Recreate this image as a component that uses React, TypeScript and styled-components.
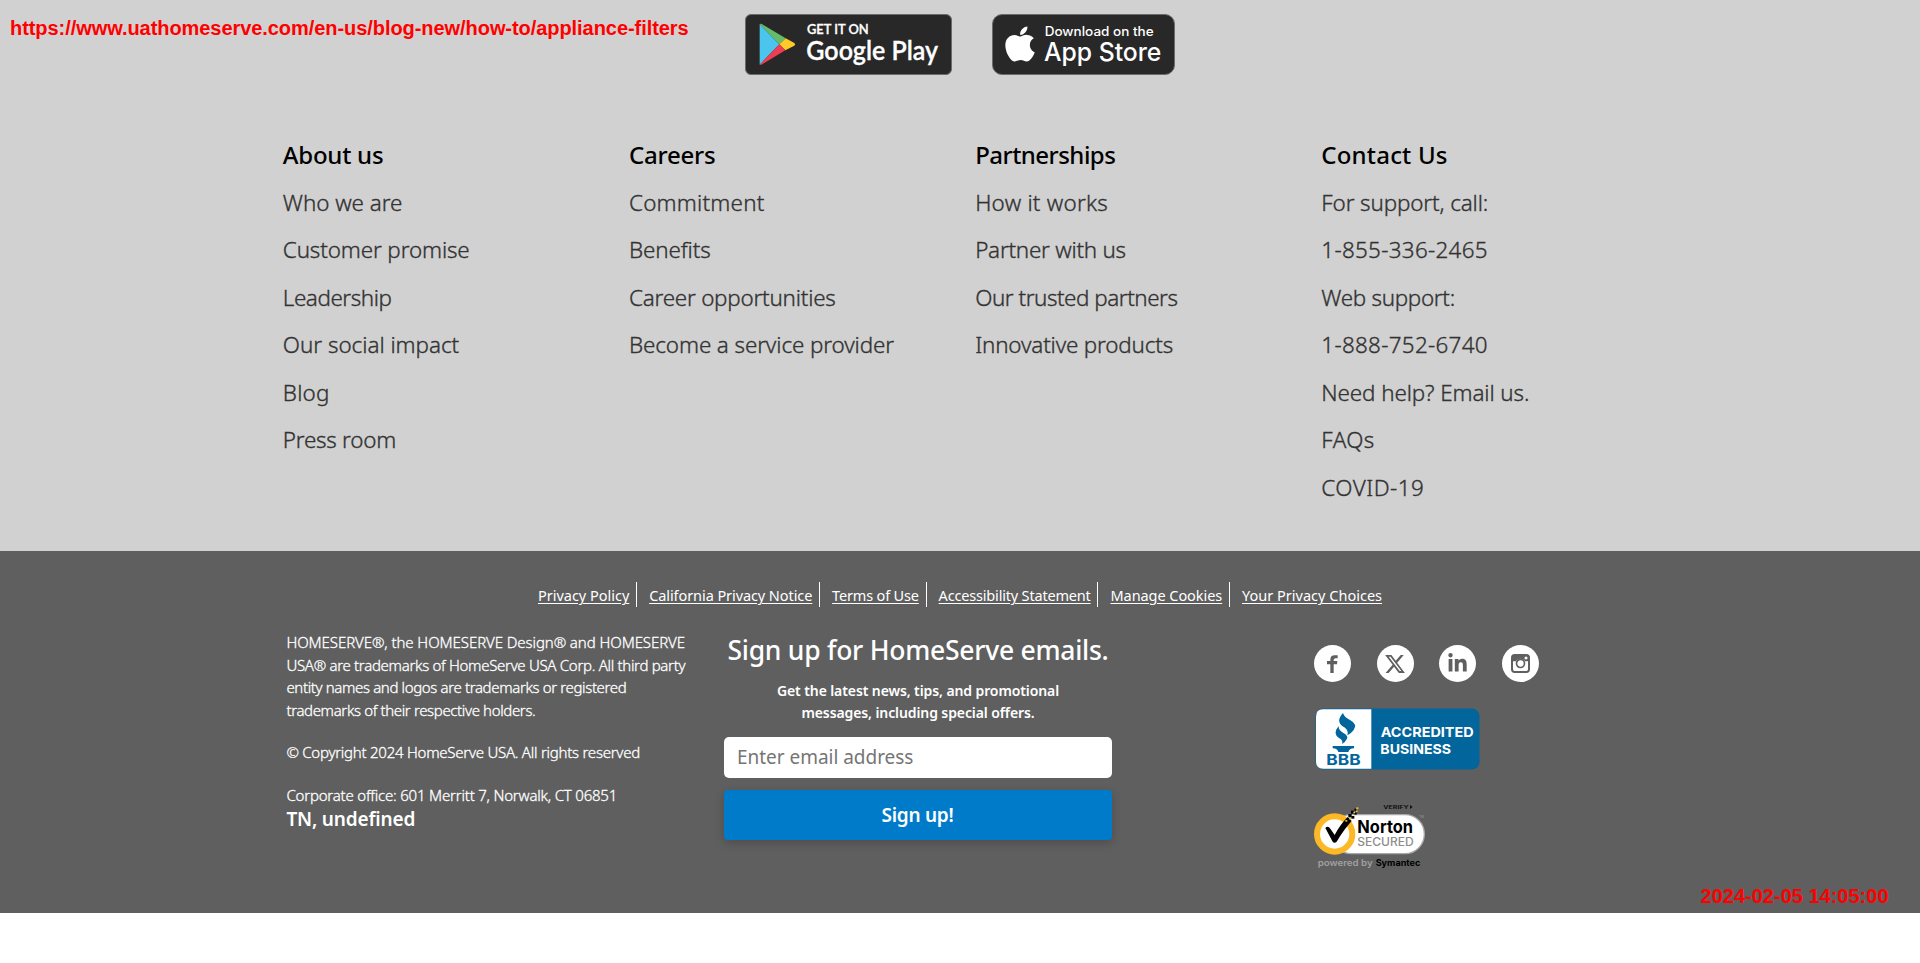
import React from 'react';
import styled, { createGlobalStyle } from 'styled-components';
import { FaApple, FaLinkedinIn, FaXTwitter } from 'react-icons/fa6';

const GlobalStyle = createGlobalStyle`
  *, *::before, *::after { box-sizing: border-box; }
  html, body { margin: 0; padding: 0; background: #fff; overflow: hidden; }
  body { font-family: "Noto Sans", "Open Sans", sans-serif; }
  svg { display: block; }
`;

const Page = styled.div`
  position: relative;
  width: 1920px;
  height: 963px;
`;

const Overlay = styled.div<{ $corner: 'top' | 'bottom' }>`
  position: absolute;
  ${p => (p.$corner === 'top'
    ? 'top: 18px; left: 10px; letter-spacing: -0.06px;'
    : 'top: 886px; right: 31.5px; letter-spacing: 0;')}
  font: 700 20px/20px "Liberation Sans", Arial, sans-serif;
  color: #ff0000;
  white-space: nowrap;
`;

const LightSection = styled.section`
  height: 551px;
  background: #d1d1d1;
`;

const StoreBadges = styled.div`
  display: flex;
  justify-content: center;
  gap: 40px;
  height: 131px;
  padding-top: 14px;
`;

const StoreBadge = styled.a<{ $width: number; $radius: number }>`
  display: block;
  width: ${p => p.$width}px;
  height: 61px;
  border-radius: ${p => p.$radius}px;
  border: 1px solid #6b6b6b;
  background: #282828;
  color: #fff;
  overflow: hidden;
`;

const LinkColumns = styled.nav`
  display: grid;
  grid-template-columns: repeat(4, 346.2px);
  padding-left: 282.8px;
`;

const ColumnTitle = styled.h3<{ $track: number }>`
  margin: 0;
  font-size: 24px;
  font-weight: 500;
  line-height: 47.5px;
  letter-spacing: ${p => p.$track}px;
  color: #000;
`;

const ColumnList = styled.ul`
  list-style: none;
  margin: 0;
  padding: 0;
`;

const ColumnItem = styled.li<{ $track: number }>`
  font-size: 22.4px;
  font-weight: 300;
  line-height: 47.5px;
  letter-spacing: ${p => p.$track}px;
  color: #333;
  -webkit-text-stroke: 0.35px #333;
  white-space: nowrap;
`;

const DarkSection = styled.section`
  height: 362px;
  padding-top: 31px;
  background: #5f5f5f;
  color: #fff;
`;

const PolicyLinks = styled.div`
  display: flex;
  justify-content: center;
  height: 49px;
`;

const PolicyLink = styled.a<{ $track: number }>`
  display: block;
  height: 25px;
  padding: 0 6.800px 0 12px;
  border-right: 1px solid #fff;
  font-size: 14.5px;
  line-height: 27.5px;
  letter-spacing: ${p => p.$track}px;
  text-decoration: underline;
  text-decoration-thickness: 1px;
  text-underline-offset: 1.5px;
  white-space: nowrap;
  &:first-child { padding-left: 0; }
  &:last-child { padding-right: 0; border-right: 0; }
`;

const FooterColumns = styled.div`
  display: flex;
  padding-left: 286px;
`;

const Legal = styled.div`
  width: 438px;
  padding-left: 0.4px;
`;

const LegalParagraph = styled.p`
  margin: 0 0 19.4px;
  & + & { margin-bottom: 20.2px; }
  &:last-of-type { margin-bottom: 0; }
`;

const LegalLine = styled.span<{ $track: number }>`
  display: block;
  font-size: 15px;
  font-weight: 300;
  line-height: 22.7px;
  letter-spacing: ${p => p.$track}px;
  -webkit-text-stroke: 0.3px #fff;
  white-space: nowrap;
`;

const Location = styled.div`
  font-size: 19px;
  font-weight: 600;
  line-height: 24px;
  letter-spacing: -0.17px;
`;

const SignUp = styled.form`
  display: flex;
  flex-direction: column;
  width: 388px;
  padding-top: 1px;
  text-align: center;
`;

const SignUpTitle = styled.h2`
  margin: 0 0 12px;
  font-size: 26.5px;
  font-weight: 500;
  line-height: 36px;
  letter-spacing: -0.26px;
  white-space: nowrap;
`;

const SignUpText = styled.p`
  margin: 0 0 13px;
  font-size: 14px;
  font-weight: 600;
  line-height: 22px;
  letter-spacing: -0.1px;
`;

const EmailInput = styled.input`
  height: 41px;
  margin: 0 0 12px;
  padding: 0 13px 1px;
  border: 0;
  border-radius: 5px;
  background: #fff;
  font: 400 19px "Noto Sans", sans-serif;
  letter-spacing: -0.03px;
  &::placeholder { color: #757575; opacity: 1; }
`;

const SubmitButton = styled.button`
  height: 50px;
  padding: 0 1px 1px 0;
  border: 0;
  border-radius: 4px;
  background: #007bc9;
  box-shadow: 0 3px 10px rgba(0, 0, 0, 0.2);
  color: #fff;
  font: 600 19px "Noto Sans", sans-serif;
  letter-spacing: -0.26px;
`;

const Trust = styled.div`
  padding: 14px 0 0 202px;
`;

const SocialRow = styled.div`
  display: flex;
  gap: 25.5px;
  height: 63px;
`;

const SocialIcon = styled.a`
  display: flex;
  align-items: center;
  justify-content: center;
  width: 37px;
  height: 37px;
  border-radius: 50%;
  background: #fff;
  color: #5f5f5f;
`;

const BbbSeal = styled.div`
  height: 97px;
  padding-left: 1px;
`;

type Entry = [label: string, track: number];

const columns: { title: Entry; items: Entry[] }[] = [
  {
    title: ['About us', -0.24],
    items: [
      ['Who we are', -0.04],
      ['Customer promise', -0.12],
      ['Leadership', -0.42],
      ['Our social impact', -0.02],
      ['Blog', 0.2],
      ['Press room', -0.24],
    ],
  },
  {
    title: ['Careers', -0.22],
    items: [
      ['Commitment', 0.22],
      ['Benefits', -0.1],
      ['Career opportunities', -0.22],
      ['Become a service provider', -0.1],
    ],
  },
  {
    title: ['Partnerships', -0.52],
    items: [
      ['How it works', 0.24],
      ['Partner with us', -0.24],
      ['Our trusted partners', -0.46],
      ['Innovative products', -0.16],
    ],
  },
  {
    title: ['Contact Us', 0.18],
    items: [
      ['For support, call:', -0.12],
      ['1-855-336-2465', 0.3],
      ['Web support:', -0.3],
      ['1-888-752-6740', 0.3],
      ['Need help? Email us.', -0.1],
      ['FAQs', 0.4],
      ['COVID-19', 0.46],
    ],
  },
];

const policies: Entry[] = [
  ['Privacy Policy', -0.01],
  ['California Privacy Notice', -0.08],
  ['Terms of Use', -0.17],
  ['Accessibility Statement', -0.18],
  ['Manage Cookies', -0.06],
  ['Your Privacy Choices', 0.01],
];

const legal: Entry[][] = [
  [
    ['HOMESERVE®, the HOMESERVE Design® and HOMESERVE', -0.08],
    ['USA® are trademarks of HomeServe USA Corp. All third party', -0.3],
    ['entity names and logos are trademarks or registered', -0.36],
    ['trademarks of their respective holders.', -0.36],
  ],
  [['© Copyright 2024 HomeServe USA. All rights reserved', -0.25]],
  [['Corporate office: 601 Merritt 7, Norwalk, CT 06851', -0.2]],
];

const GooglePlayArt = () => (
  <svg width="205" height="59" viewBox="49 45 615 177">
    <path d="M90 72V194L149 133Z" fill="#4bc4ee" />
    <path d="M90 72Q94 70 100 74L168 115L149 133Z" fill="#66bb6a" />
    <path d="M168 115L194 129Q199 133 194 137L167 151L149 133Z" fill="#ffca28" />
    <path d="M90 194Q94 196 100 191L167 151L149 133Z" fill="#ef3e52" />
    <g fill="#fff" stroke="#fff" strokeWidth="1" fontFamily="Lato, sans-serif">
      <text x="232" y="101" fontSize="39" fontWeight="600" textLength="185" lengthAdjust="spacingAndGlyphs">GET IT ON</text>
      <text x="230" y="180" fontSize="81" fontWeight="600" textLength="395" lengthAdjust="spacingAndGlyphs">Google Play</text>
    </g>
  </svg>
);

const AppStoreArt = () => (
  <svg width="181" height="59" viewBox="789 45 543 177">
    <FaApple x="810" y="72" size={120} color="#fff" />
    <g fill="#fff" fontFamily="Inter, sans-serif">
      <text x="944" y="109" fontSize="38" fontWeight="500" textLength="327" lengthAdjust="spacingAndGlyphs">Download on the</text>
      <text x="942" y="182" fontSize="76" fontWeight="500" textLength="352" lengthAdjust="spacingAndGlyphs">App Store</text>
    </g>
  </svg>
);

const FacebookGlyph = () => (
  <svg width="11" height="18" viewBox="0 0 33 54">
    <path d="M10 54V28H0V18H10V14Q10 1 23 1H32V10H26Q20 10 20 15V18H31L30 28H20V54Z" fill="currentColor" />
  </svg>
);

const InstagramGlyph = () => (
  <svg width="19" height="19" viewBox="0 0 57 57">
    <rect x="3" y="3" width="51" height="51" rx="8" fill="none" stroke="currentColor" strokeWidth="6" />
    <path d="M3 10Q3 3 10 3H47Q54 3 54 10V22H42A16 16 0 0 0 15 22H3Z" fill="currentColor" />
    <rect x="41" y="8" width="8" height="8" rx="1" fill="#fff" />
    <circle cx="28.5" cy="28.5" r="12" fill="#fff" stroke="currentColor" strokeWidth="5" />
  </svg>
);

const BbbArt = () => (
  <svg width="165" height="62" viewBox="48 234 495 186">
    <rect x="49.500" y="235.500" width="492" height="183" rx="22" fill="#02659b" />
    <path d="M217 238H72Q51 238 51 260V394Q51 416 72 416H217Z" fill="#fff" />
    <g fill="#02659b">
      <path d="M132 249Q136 262 153 270Q176 282 164 300Q159 308 145 316Q150 302 136 292Q107 276 132 249Z" />
      <path d="M119 288Q118 301 132 308Q150 317 143 328Q138 338 129 342Q134 331 120 324Q100 311 119 288Z" />
      <path d="M101 348H165V355Q150 356 148 366H118Q116 356 101 355Z" />
    </g>
    <g fontFamily="Inter, sans-serif">
      <text x="82" y="404" fill="#02659b" fontSize="43" fontWeight="700" textLength="103" lengthAdjust="spacingAndGlyphs">BBB</text>
      <g fill="#fff" fontWeight="700" fontSize="41">
        <text x="245" y="321" textLength="279" lengthAdjust="spacingAndGlyphs">ACCREDITED</text>
        <text x="244" y="373" textLength="212" lengthAdjust="spacingAndGlyphs">BUSINESS</text>
      </g>
    </g>
  </svg>
);

const NortonArt = () => (
  <svg width="114" height="67" viewBox="42 45 342 201">
    <rect x="96" y="74" width="277" height="117" rx="58" fill="#fff" stroke="#a8a8a8" strokeWidth="4" />
    <circle cx="104" cy="132" r="53" fill="#fff" stroke="#fdb825" strokeWidth="18" />
    <path d="M76 114Q84 106 91 116L104 135Q120 104 143 81L155 93Q132 118 110 155Q103 161 98 155Z" fill="#000" />
    <g fill="#000">
      <rect x="145" y="72" width="10" height="10" />
      <rect x="154" y="78" width="9" height="8" />
      <rect x="153" y="62" width="9" height="9" />
      <rect x="163" y="68" width="7" height="6" />
      <rect x="163" y="56" width="6" height="6" />
    </g>
    <g fill="#fdb825">
      <rect x="136" y="90" width="6" height="5" />
      <rect x="148" y="84" width="5" height="5" />
      <rect x="160" y="65" width="5" height="5" />
      <rect x="169" y="52" width="6" height="6" />
      <rect x="168" y="62" width="5" height="4" />
    </g>
    <g fontFamily="Inter, sans-serif">
      <text x="250" y="56" fill="#111" fontSize="14" fontWeight="700" textLength="76" lengthAdjust="spacingAndGlyphs">VERIFY</text>
      <path d="M330 45L338 51L330 57Z" fill="#111" />
      <text x="172" y="130" fill="#000" fontSize="54" fontWeight="700" textLength="167" lengthAdjust="spacingAndGlyphs">Norton</text>
      <text x="172" y="168" fill="#8c8c8c" fontSize="34" fontWeight="500" textLength="169" lengthAdjust="spacingAndGlyphs">SECURED</text>
      <text x="357" y="84" fill="#999" fontSize="10" textLength="15" lengthAdjust="spacingAndGlyphs">TM</text>
      <text x="53" y="229" fill="#a0a0a0" fontSize="27" fontWeight="600" textLength="165" lengthAdjust="spacingAndGlyphs">powered by</text>
      <text x="227" y="229" fill="#000" fontSize="27" fontWeight="700" textLength="134" lengthAdjust="spacingAndGlyphs">Symantec</text>
    </g>
  </svg>
);

export default function App() {
  return (
    <Page>
      <GlobalStyle />
      <LightSection>
        <StoreBadges>
          <StoreBadge $width={207} $radius={6}><GooglePlayArt /></StoreBadge>
          <StoreBadge $width={183} $radius={10}><AppStoreArt /></StoreBadge>
        </StoreBadges>
        <LinkColumns>
          {columns.map(({ title, items }) => (
            <div key={title[0]}>
              <ColumnTitle $track={title[1]}>{title[0]}</ColumnTitle>
              <ColumnList>
                {items.map(([label, track]) => (
                  <ColumnItem key={label} $track={track}>{label}</ColumnItem>
                ))}
              </ColumnList>
            </div>
          ))}
        </LinkColumns>
      </LightSection>
      <DarkSection>
        <PolicyLinks>
          {policies.map(([label, track]) => (
            <PolicyLink key={label} $track={track}>{label}</PolicyLink>
          ))}
        </PolicyLinks>
        <FooterColumns>
          <Legal>
            {legal.map(lines => (
              <LegalParagraph key={lines[0][0]}>
                {lines.map(([line, track]) => (
                  <LegalLine key={line} $track={track}>{line}</LegalLine>
                ))}
              </LegalParagraph>
            ))}
            <Location>TN, undefined</Location>
          </Legal>
          <SignUp>
            <SignUpTitle>Sign up for HomeServe emails.</SignUpTitle>
            <SignUpText>
              Get the latest news, tips, and promotional<br />
              messages, including special offers.
            </SignUpText>
            <EmailInput type="email" placeholder="Enter email address" />
            <SubmitButton type="button">Sign up!</SubmitButton>
          </SignUp>
          <Trust>
            <SocialRow>
              <SocialIcon><FacebookGlyph /></SocialIcon>
              <SocialIcon><FaXTwitter size={22} /></SocialIcon>
              <SocialIcon><FaLinkedinIn size={21} /></SocialIcon>
              <SocialIcon><InstagramGlyph /></SocialIcon>
            </SocialRow>
            <BbbSeal><BbbArt /></BbbSeal>
            <NortonArt />
          </Trust>
        </FooterColumns>
      </DarkSection>
      <Overlay $corner="top">https://www.uathomeserve.com/en-us/blog-new/how-to/appliance-filters</Overlay>
      <Overlay $corner="bottom">2024-02-05 14:05:00</Overlay>
    </Page>
  );
}
